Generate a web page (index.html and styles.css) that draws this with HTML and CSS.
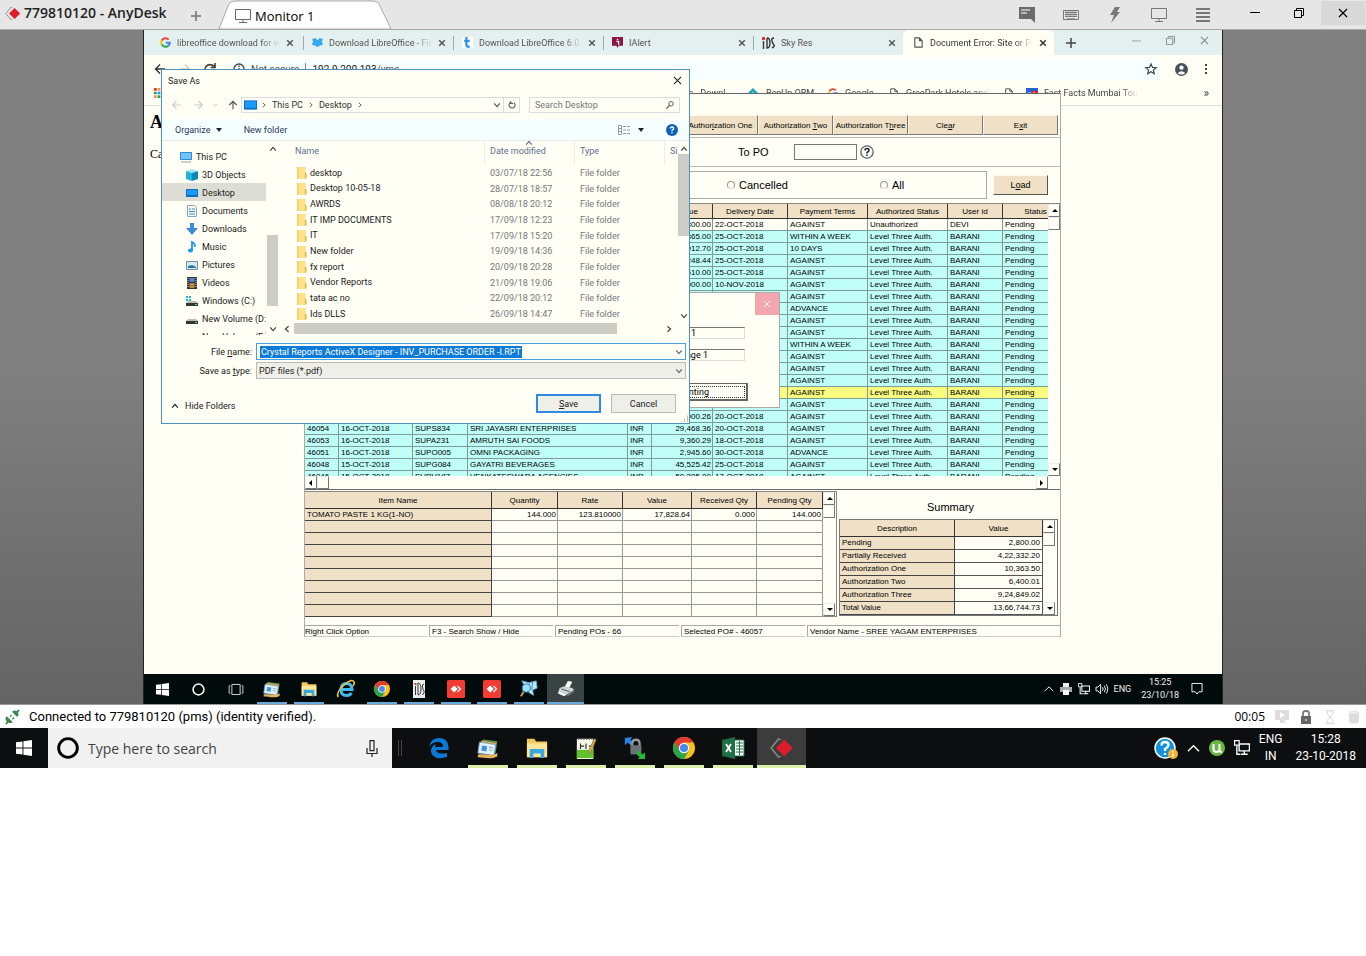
FILE: index.html
```html
<!DOCTYPE html>
<html lang="en">
<head>
<meta charset="utf-8">
<title>779810120 - AnyDesk</title>
<link rel="stylesheet" href="styles.css">
</head>
<body>
<svg class="sprite" aria-hidden="true">
  <symbol id="x" viewBox="0 0 10 10"><path d="M1 1l8 8M9 1l-8 8" fill="none" stroke="currentColor" stroke-width="1.2"/></symbol>
  <symbol id="xb" viewBox="0 0 10 10"><path d="M1.5 1.5l7 7M8.500 1.500l-7 7" fill="none" stroke="currentColor" stroke-width="1.800"/></symbol>
  <symbol id="up" viewBox="0 0 10 10"><path d="M1.500 7L5 3l3.500 4" fill="none" stroke="currentColor" stroke-width="1.500"/></symbol>
  <symbol id="wideup" viewBox="0 0 14 10"><path d="M1 8l6-6 6 6" fill="none" stroke="currentColor" stroke-width="1.400"/></symbol>
  <symbol id="down" viewBox="0 0 10 10"><path d="M1.500 3L5 7l3.500-4" fill="none" stroke="currentColor" stroke-width="1.500"/></symbol>
  <symbol id="left" viewBox="0 0 10 10"><path d="M7 1.500L3 5l4 3.500" fill="none" stroke="currentColor" stroke-width="1.500"/></symbol>
  <symbol id="right" viewBox="0 0 10 10"><path d="M3 1.500L7 5 3 8.500" fill="none" stroke="currentColor" stroke-width="1.500"/></symbol>
  <symbol id="arrow" viewBox="0 0 12 12"><path d="M11 6H1.500M6 1.500L1.500 6 6 10.500" fill="none" stroke="currentColor" stroke-width="1.400"/></symbol>
  <symbol id="folder" viewBox="0 0 10 13"><path d="M0 0h9v13H0z" fill="#fbe48b"/><path d="M0 0h1v13H0zM8 6l2 1v5l-2 1z" fill="#e6bd4b"/></symbol>
  <symbol id="page" viewBox="0 0 10 12"><path d="M1 1h5l3 3v7H1zM6 1v3h3" fill="none" stroke="#555" stroke-width="1.200"/></symbol>
  <symbol id="screen" viewBox="0 0 16 14"><path d="M.5.5h15v10H.5zM4 13.500h8M8 10.500v3" fill="none" stroke="currentColor"/></symbol>
  <symbol id="win" viewBox="0 0 16 16"><path d="M0 2.300l6.500-.9v6.100H0zM7.400 1.300L16 0v7.500H7.400zM0 8.400h6.500v6.200L0 13.700zM7.400 8.400H16V16l-8.600-1.200z" fill="#fff"/></symbol>
  <symbol id="google" viewBox="0 0 18 18"><g fill="none" stroke-width="3.400"><path d="M14.200 4.200A7 7 0 0 0 2.900 5.700" stroke="#ea4335"/><path d="M2.900 5.700a7 7 0 0 0 0 6.600" stroke="#fbbc05"/><path d="M2.900 12.300a7 7 0 0 0 10.800 2" stroke="#34a853"/><path d="M13.700 14.300A7 7 0 0 0 16 9.500H9.500" stroke="#4285f4"/></g></symbol>
  <symbol id="chrome" viewBox="0 0 24 24"><circle cx="12" cy="12" r="12" fill="#fbc116"/><path d="M1.600 6A12 12 0 0 1 22.400 6H12L7 15z" fill="#e33b2e"/><path d="M1.600 6A12 12 0 0 0 12 24l5.200-9-5.200 2-5-2z" fill="#2ba24c"/><circle cx="12" cy="12" r="5.600" fill="#fff"/><circle cx="12" cy="12" r="4.400" fill="#4688f1"/></symbol>
  <symbol id="explorer" viewBox="0 0 24 22"><path d="M1 1h8l2 3h12v17H1z" fill="#f5c75c"/><path d="M1 6h22v15H1z" fill="#fde59a"/><path d="M4 12h16v10h-4v-5H8v5H4z" fill="#38a9e0"/></symbol>
  <symbol id="photos" viewBox="0 0 26 26"><path d="M7 3l17 2-2 14-17-2z" fill="#4c9b55"/><path d="M5 4l18 3-3 14-17-3z" fill="#eaa34a"/><path d="M3 6l19 3-2 13-19-3z" fill="#dff1fc" stroke="#659ec1"/><path d="M6 10l6 1-1 6-6-1z" fill="#3f96d8"/><path d="M14 12l5 1M14 15l4 1" stroke="#7694a5"/><path d="M1 21c7-2 13 3 23-2v4c-8 4-16 1-23 1z" fill="#e5b35f"/></symbol>
  <symbol id="anyred" viewBox="0 0 20 20"><rect width="20" height="20" rx="2" fill="#f23c32"/><path d="M8 6l4 4-4 4-4-4zM12 6l4 4-4 4-1-1 3-3-3-3z" fill="#fff"/></symbol>
  <symbol id="anydesk" viewBox="0 0 20 16"><path d="M9 1L7 .500 1 8l6 7.500 2-.5" fill="none" stroke="#8c8c8c" stroke-width="1.200"/><path d="M12 1l7 7-7 7-7-7z" fill="#dd1d2c"/></symbol>
  <symbol id="net" viewBox="0 0 14 14"><path d="M4.500 3.500h9v6h-9zM9 9.500v3M6 12.500h6M2.500 5v7.500h3" fill="none" stroke="#fff" stroke-width="1.200"/><path d="M.5.500h4v4h-4z" fill="#111" stroke="#fff"/></symbol>
  <symbol id="drive" viewBox="0 0 12 12"><path d="M2 6h8l2 2H0z" fill="#bbb"/><path d="M0 8h12v3H0z" fill="#333"/><path d="M9 9h2v1H9z" fill="#5d8"/></symbol>
</svg>

<header class="titlebar">
  <svg class="logo"><use href="#anydesk"/></svg>
  <h1>779810120 - AnyDesk</h1>
  <button class="plus" aria-label="New tab"><svg viewBox="0 0 10 10"><path d="M5 0v10M0 5h10" stroke="#777" stroke-width="1.600"/></svg></button>
  <div class="session-tab">
    <svg class="tab-shape" viewBox="0 0 172 28" preserveAspectRatio="none"><path d="M0 28L9 5Q11 0 15 0H155Q159 0 161 5L172 28z" fill="#fff" stroke="#aaa"/></svg>
    <svg class="mon"><use href="#screen"/></svg><span>Monitor 1</span>
  </div>
  <div class="tools">
    <button aria-label="Chat"><svg viewBox="0 0 16 16"><path d="M0 0h16v16l-4-4H0z" fill="#6b6b6b"/><path d="M2 3h9M2 6h6" stroke="#fff" stroke-width="1.200"/></svg></button>
    <button aria-label="Keyboard"><svg viewBox="0 0 16 16"><path d="M.500 3.500h15v9H.500zM2 5.500h12M2 7.500h12M2 9.500h12" fill="none" stroke="#777"/><path d="M3 4v6M5 4v6M7 4v6M9 4v6M11 4v6M13 4v6M4 11.500h8" stroke="#888" stroke-width=".7"/></svg></button>
    <button aria-label="Actions"><svg viewBox="0 0 16 16"><path d="M8 0h5l-3 5h3L4 16l3-8H3z" fill="#777"/></svg></button>
    <button aria-label="Display"><svg viewBox="0 0 16 14"><use href="#screen"/></svg></button>
    <button aria-label="Menu"><svg viewBox="0 0 16 16"><path d="M1 2h14M1 6h14M1 10h14M1 14h14" stroke="#777" stroke-width="1.800"/></svg></button>
  </div>
  <div class="winctl">
    <button aria-label="Minimize"><svg viewBox="0 0 10 10"><path d="M0 4.500h10" stroke="#000"/></svg></button>
    <button aria-label="Restore"><svg viewBox="0 0 10 10"><path d="M.500 2.500h7v7h-7zM2.500 2V.500h7v7H8" fill="none" stroke="#000"/></svg></button>
    <button class="hot" aria-label="Close"><svg><use href="#x"/></svg></button>
  </div>
</header>

<main class="stage">
 <div class="screen">
  <nav class="tabs">
    <div class="tab"><svg><use href="#google"/></svg><span class="fade">libreoffice download for w</span><button aria-label="Close tab"><svg><use href="#xb"/></svg></button></div>
    <div class="tab"><svg viewBox="0 0 10 10"><path d="M0 2l3-1 2 2 2-2 3 1-1 2 1 3-3 1-2 1-2-1-3-1 1-3z" fill="#38a8ef"/></svg><span class="fade">Download LibreOffice - Fil</span><button aria-label="Close tab"><svg><use href="#xb"/></svg></button></div>
    <div class="tab"><svg viewBox="0 0 10 10"><path d="M0 0h10v10H0z" fill="#fff"/><path d="M4 0v7q0 2 3 2M2 3.500h5" stroke="#2c8ff0" stroke-width="2" fill="none"/></svg><span class="fade">Download LibreOffice 6.0.</span><button aria-label="Close tab"><svg><use href="#xb"/></svg></button></div>
    <div class="tab"><svg viewBox="0 0 10 10"><path d="M0 0h10v8H6l-1 2-1-2H0z" fill="#8c1743"/><path d="M4 4h2v3M5 1.500v1.300" stroke="#fff" stroke-width="1.200" fill="none"/></svg><span>IAlert</span><button aria-label="Close tab"><svg><use href="#xb"/></svg></button></div>
    <div class="tab last"><svg class="ids" viewBox="0 0 13 12"><path d="M1.500 4v8M5 1v10q3 0 3-5T5 1M12 1q-3 0-2 3t2 4-2 3" stroke="#333" stroke-width="1.400" fill="none"/><path d="M0 0h3v3H0z" fill="#d33"/></svg><span>Sky Res</span><button aria-label="Close tab"><svg><use href="#xb"/></svg></button></div>
    <div class="tab active"><svg><use href="#page"/></svg><span class="fade">Document Error: Site or Pa</span><button aria-label="Close tab"><svg><use href="#xb"/></svg></button></div>
    <button class="newtab" aria-label="New tab"><svg viewBox="0 0 10 10"><path d="M5 0v10M0 5h10" stroke="#444" stroke-width="1.500"/></svg></button>
    <div class="chromectl">
      <svg viewBox="0 0 10 10"><path d="M0 5.500h10" stroke="#999"/></svg>
      <svg viewBox="0 0 10 10"><path d="M.500 2.500h7v7h-7zM2.500 2V.500h7v7H8" fill="none" stroke="#888"/></svg>
      <svg><use href="#x"/></svg>
    </div>
  </nav>
  <div class="toolbar">
    <svg><use href="#arrow"/></svg><svg class="dim flip"><use href="#arrow"/></svg>
    <svg viewBox="0 0 12 12"><path d="M10 3.500A5 5 0 1 0 11 7M11 0v4.500H6.500" fill="none" stroke="#444" stroke-width="1.700"/></svg>
    <div class="omni"><svg viewBox="0 0 12 12"><circle cx="6" cy="6" r="5" fill="none" stroke="#444" stroke-width="1.300"/><path d="M6 5v4M6 2.500V4" stroke="#444" stroke-width="1.300"/></svg><span>Not secure</span><i></i><b>192.9.200.193</b><span>/vms</span>
      <svg class="star" viewBox="0 0 12 12"><path d="M6 1l1.500 3.400 3.700.3-2.800 2.400.9 3.600L6 8.800l-3.300 1.900.9-3.600L.800 4.700l3.700-.3z" fill="none" stroke="#444" stroke-width="1.200"/></svg></div>
    <svg class="user" viewBox="0 0 14 14"><circle cx="7" cy="7" r="7" fill="#44525a"/><circle cx="7" cy="5" r="2.300" fill="#fff"/><path d="M2.800 11q4.200-4.500 8.400 0-4 3-8.400 0" fill="#fff"/></svg>
    <svg class="dots" viewBox="0 0 4 12"><path d="M1 1h2v2H1zM1 5h2v2H1zM1 9h2v2H1z" fill="#444"/></svg>
  </div>
  <div class="bookmarks">
    <svg viewBox="0 0 11 11"><path d="M0 0h3v3H0zM8 0h3v3H8z" fill="#e33"/><path d="M4 0h3v3H4zM0 8h3v3H0z" fill="#e94"/><path d="M0 4h3v3H0zM4 8h3v3H4z" fill="#2a5"/><path d="M4 4h3v3H4zM8 4h3v3H8z" fill="#38e"/></svg>
    <span class="bm-first fade">es - Downl</span>
    <svg viewBox="0 0 10 10"><path d="M5 0l5 5-5 5-5-5z" fill="#1ba9b9"/><path d="M5 4l2 2-2 2-2-2z" fill="#fff"/></svg><span class="bm-b">RepUp ORM</span>
    <svg><use href="#google"/></svg><span class="bm-c">Google</span>
    <svg><use href="#page"/></svg><span class="bm-d fade">GreePark Hotels and -</span>
    <svg class="bm-e"><use href="#page"/></svg>
    <svg class="ff" viewBox="0 0 12 10"><path d="M0 0h12v10H0z" fill="#2b61d1"/><path d="M6 3h6v5H6z" fill="#e22"/><path d="M2 5h3M8 4v3" stroke="#fff"/></svg><span class="fade">Fast Facts Mumbai Tou</span>
    <span class="more">»</span>
  </div>
  <div class="webpage"><h2>A</h2><p>Ca</p></div>

  <section class="erp">
    <div class="actions">
      <button>Author<u>i</u>zation One</button><button>Authorization <u>T</u>wo</button><button>Authorization T<u>h</u>ree</button><button>Cle<u>a</u>r</button><button>E<u>x</u>it</button>
    </div>
    <div class="po"><label for="topo">To PO</label><input id="topo" type="text"><svg viewBox="0 0 14 14"><circle cx="7" cy="7" r="6.200" fill="#fff" stroke="#566" stroke-width="1.300"/><path d="M5 5.500q0-2 2-2t2 1.700q0 1-2 2.300v1M7 9.500v1.500" fill="none" stroke="#222" stroke-width="1.500"/></svg></div>
    <div class="filter">
      <div class="radios"><label><input type="radio" name="st"> Cancelled</label><label><input type="radio" name="st"> All</label></div>
      <button>L<u>o</u>ad</button>
    </div>
    <div class="orders">
      <div class="clip">
      <table>
        <colgroup><col class="w34"><col class="w74"><col class="w55"><col class="w160"><col class="w24"><col class="w61"><col class="w75"><col class="w80"><col class="w80"><col class="w55"><col class="w66"></colgroup>
        <thead><tr><th colspan="5"></th><th class="val">Value</th><th>Delivery Date</th><th>Payment Terms</th><th>Authorized Status</th><th>User id</th><th>Status</th></tr></thead>
        <tbody>
        <tr class="plain"><td colspan="5"><td class="n">800.00<td>22-OCT-2018<td>AGAINST<td>Unauthorized<td>DEVI<td>Pending</tr>
        <tr><td colspan="5"><td class="n">365.00<td>25-OCT-2018<td>WITHIN A WEEK<td>Level Three Auth.<td>BARANI<td>Pending</tr>
        <tr><td colspan="5"><td class="n">912.70<td>25-OCT-2018<td>10 DAYS<td>Level Three Auth.<td>BARANI<td>Pending</tr>
        <tr><td colspan="5"><td class="n">248.44<td>25-OCT-2018<td>AGAINST<td>Level Three Auth.<td>BARANI<td>Pending</tr>
        <tr><td colspan="5"><td class="n">610.00<td>25-OCT-2018<td>AGAINST<td>Level Three Auth.<td>BARANI<td>Pending</tr>
        <tr><td colspan="5"><td class="n">000.00<td>10-NOV-2018<td>AGAINST<td>Level Three Auth.<td>BARANI<td>Pending</tr>
        <tr><td colspan="5"><td><td><td>AGAINST<td>Level Three Auth.<td>BARANI<td>Pending</tr>
        <tr><td colspan="5"><td><td><td>ADVANCE<td>Level Three Auth.<td>BARANI<td>Pending</tr>
        <tr><td colspan="5"><td><td><td>AGAINST<td>Level Three Auth.<td>BARANI<td>Pending</tr>
        <tr><td colspan="5"><td><td><td>AGAINST<td>Level Three Auth.<td>BARANI<td>Pending</tr>
        <tr><td colspan="5"><td><td><td>WITHIN A WEEK<td>Level Three Auth.<td>BARANI<td>Pending</tr>
        <tr><td colspan="5"><td><td><td>AGAINST<td>Level Three Auth.<td>BARANI<td>Pending</tr>
        <tr><td colspan="5"><td><td><td>AGAINST<td>Level Three Auth.<td>BARANI<td>Pending</tr>
        <tr><td colspan="5"><td><td><td>AGAINST<td>Level Three Auth.<td>BARANI<td>Pending</tr>
        <tr class="sel"><td colspan="5"><td><td><td>AGAINST<td>Level Three Auth.<td>BARANI<td>Pending</tr>
        <tr><td colspan="5"><td><td><td>AGAINST<td>Level Three Auth.<td>BARANI<td>Pending</tr>
        <tr><td colspan="5"><td class="n">000.26<td>20-OCT-2018<td>AGAINST<td>Level Three Auth.<td>BARANI<td>Pending</tr>
        <tr><td>46054<td>16-OCT-2018<td>SUPS834<td>SRI JAYASRI ENTERPRISES<td>INR<td class="n">29,468.36<td>20-OCT-2018<td>AGAINST<td>Level Three Auth.<td>BARANI<td>Pending</tr>
        <tr><td>46053<td>16-OCT-2018<td>SUPA231<td>AMRUTH SAI FOODS<td>INR<td class="n">9,360.29<td>18-OCT-2018<td>AGAINST<td>Level Three Auth.<td>BARANI<td>Pending</tr>
        <tr><td>46051<td>16-OCT-2018<td>SUPO005<td>OMNI PACKAGING<td>INR<td class="n">2,945.60<td>30-OCT-2018<td>ADVANCE<td>Level Three Auth.<td>BARANI<td>Pending</tr>
        <tr><td>46048<td>15-OCT-2018<td>SUPG084<td>GAYATRI BEVERAGES<td>INR<td class="n">45,525.42<td>25-OCT-2018<td>AGAINST<td>Level Three Auth.<td>BARANI<td>Pending</tr>
        <tr><td>46046<td>15-OCT-2018<td>SUPV187<td>VENKATESWARA AGENCIES<td>INR<td class="n">50,205.00<td>17-OCT-2018<td>AGAINST<td>Level Three Auth.<td>BARANI<td>Pending</tr>
        </tbody>
      </table>
      </div>
      <div class="vbar"><i class="u"></i><i class="box"></i><i class="d end"></i></div>
    </div>
    <div class="hbar"><i class="l"></i><i class="box"></i><i class="r end"></i></div>
    <div class="bottom">
      <table class="items">
        <colgroup><col class="w187"><col class="w66"><col class="w65"><col class="w69"><col class="w65"><col class="w66"></colgroup>
        <thead><tr><th>Item Name<th>Quantity<th>Rate<th>Value<th>Received Qty<th>Pending Qty</tr></thead>
        <tbody>
        <tr><td>TOMATO PASTE 1 KG(1-NO)<td>144.000<td>123.810000<td>17,828.64<td>0.000<td>144.000</tr>
        <tr><td><td><td><td><td><td></tr><tr><td><td><td><td><td><td></tr><tr><td><td><td><td><td><td></tr><tr><td><td><td><td><td><td></tr>
        <tr><td><td><td><td><td><td></tr><tr><td><td><td><td><td><td></tr><tr><td><td><td><td><td><td></tr><tr><td><td><td><td><td><td></tr>
        </tbody>
      </table>
      <div class="vbar"><i class="u"></i><i class="box"></i><i class="d end"></i></div>
      <div class="summary">
        <h3>Summary</h3>
        <div class="sumrow">
        <table>
          <thead><tr><th>Description<th>Value</tr></thead>
          <tbody><tr><td>Pending<td>2,800.00</tr><tr><td>Partially Received<td>4,22,332.20</tr><tr><td>Authorization One<td>10,363.50</tr><tr><td>Authorization Two<td>6,400.01</tr><tr><td>Authorization Three<td>9,24,849.02</tr><tr><td>Total Value<td>13,66,744.73</tr></tbody>
        </table>
        <div class="vbar"><i class="u"></i><i class="box"></i><i class="d end"></i></div>
        </div>
      </div>
    </div>
    <footer><span>Right Click Option</span><span>F3 - Search Show / Hide</span><span>Pending POs - 66</span><span>Selected PO# - 46057</span><span>Vendor Name - SREE YAGAM ENTERPRISES</span></footer>
  </section>

  <section class="printing">
    <button class="pclose" aria-label="Close"><svg><use href="#x"/></svg></button>
    <p>1</p><p>Page 1</p>
    <button class="cancelp">Cancel Printing</button>
  </section>

  <section class="dialog" role="dialog" aria-label="Save As">
    <div class="dtitle"><span>Save As</span><button aria-label="Close"><svg><use href="#x"/></svg></button></div>
    <div class="addr">
      <svg class="dim"><use href="#arrow"/></svg><svg class="dim flip"><use href="#arrow"/></svg><svg class="dim tiny"><use href="#down"/></svg><svg class="north"><use href="#arrow"/></svg>
      <div class="path"><svg class="desk" viewBox="0 0 14 10"><path d="M0 0h14v10H0z" fill="#0f6fc4"/><path d="M1 1h12v7H1z" fill="#1a9bfc"/></svg><svg><use href="#right"/></svg><span>This PC</span><svg><use href="#right"/></svg><span>Desktop</span><svg><use href="#right"/></svg><svg class="end drop"><use href="#down"/></svg></div>
      <button class="refresh" aria-label="Refresh"><svg viewBox="0 0 10 10"><path d="M3 1.800A3.800 3.800 0 1 0 7.500 2M3.500 0v3h3" fill="none" stroke="#555" stroke-width="1.300"/></svg></button>
      <div class="search"><input type="text" placeholder="Search Desktop" aria-label="Search Desktop"><svg viewBox="0 0 10 10"><circle cx="6.300" cy="3.500" r="2.800" fill="none" stroke="#555" stroke-width="1.200"/><path d="M4.500 5.500L.500 9.500" stroke="#555" stroke-width="1.500"/></svg></div>
    </div>
    <div class="dtools"><button>Organize <i class="tri"></i></button><button>New folder</button>
      <svg class="view" viewBox="0 0 13 10"><path d="M.500.500h3v9h-3zM.500 3.500h3M.500 6.500h3" fill="none" stroke="#999"/><path d="M5 1.500h3M9 1.500h3M5 5h3M9 5h3M5 8.500h3M9 8.500h3" stroke="#999"/></svg><i class="tri"></i>
      <svg class="help" viewBox="0 0 12 12"><circle cx="6" cy="6" r="6" fill="#0d62b8"/><path d="M4.300 4.600q0-1.600 1.700-1.600t1.700 1.400q0 .8-1.700 1.900v1M6 8v1.300" fill="none" stroke="#fff" stroke-width="1.300"/></svg></div>
    <div class="dbody">
      <ul class="tree">
        <li class="root"><svg viewBox="0 0 12 12"><path d="M0 1h12v8H0z" fill="#2c8fda"/><path d="M1 2h10v6H1z" fill="#74c4f7"/><path d="M1 11h10" stroke="#99a" /></svg>This PC</li>
        <li><svg viewBox="0 0 12 12"><path d="M0 2l6-2 6 2-6 2z" fill="#9ce6f7"/><path d="M0 2l6 2v8l-6-2z" fill="#1fb3d8"/><path d="M12 2L6 4v8l6-2z" fill="#0b89b4"/></svg>3D Objects</li>
        <li class="on"><svg viewBox="0 0 12 12"><path d="M0 2h12v8H0z" fill="#0f6fc4"/><path d="M1 3h10v5H1z" fill="#1a9bfc"/></svg>Desktop</li>
        <li><svg viewBox="0 0 12 12"><path d="M1.500.500h7l2 2v9h-9z" fill="#f4f9fb" stroke="#8aa"/><path d="M3 4h2M6 4h3M3 6.500h6M3 9h6" stroke="#3f87ba"/></svg>Documents</li>
        <li><svg viewBox="0 0 12 12"><path d="M4 0h4v5h4l-6 7-6-7h4z" fill="#3d8bdd"/></svg>Downloads</li>
        <li><svg viewBox="0 0 12 12"><path d="M6 9V1q3 1 3 5" fill="none" stroke="#189ae8" stroke-width="1.800"/><ellipse cx="4.500" cy="9.500" rx="2.500" ry="2" fill="#189ae8"/></svg>Music</li>
        <li><svg viewBox="0 0 12 12"><path d="M.500 2.500h11v8H.500z" fill="#cfe9f8" stroke="#889"/><path d="M2 9V7l4-1 4 2v1z" fill="#267d9a"/></svg>Pictures</li>
        <li><svg viewBox="0 0 12 12"><path d="M1 0h10v12H1z" fill="#333"/><path d="M3.500 1h5v4h-5z" fill="#5483d6"/><path d="M3.500 6h5v5h-5z" fill="#b58a45"/><path d="M2 1v10M10 1v10" stroke="#ddd" stroke-dasharray="1 1"/></svg>Videos</li>
        <li><svg viewBox="0 0 12 12"><use href="#drive"/><path d="M0 1h2v2H0zM3 1h2v2H3zM0 4h2v2H0zM3 4h2v2H3z" fill="#1fb6e0"/></svg>Windows (C:)</li>
        <li><svg><use href="#drive"/></svg>New Volume (D:)</li>
        <li><svg></svg>New Volume (E:)</li>
      </ul>
      <div class="sbar"><svg><use href="#up"/></svg><i></i><svg class="end"><use href="#down"/></svg></div>
      <div class="files">
        <div class="fmain">
          <table>
            <thead><tr><th>Name<th class="sorted">Date modified<svg><use href="#up"/></svg><th>Type<th>Size</tr></thead>
            <tbody>
            <tr><td><svg><use href="#folder"/></svg>desktop<td>03/07/18 22:56<td>File folder<td></tr>
            <tr><td><svg><use href="#folder"/></svg>Desktop 10-05-18<td>28/07/18 18:57<td>File folder<td></tr>
            <tr><td><svg><use href="#folder"/></svg>AWRDS<td>08/08/18 20:12<td>File folder<td></tr>
            <tr><td><svg><use href="#folder"/></svg>IT IMP DOCUMENTS<td>17/09/18 12:23<td>File folder<td></tr>
            <tr><td><svg><use href="#folder"/></svg>IT<td>17/09/18 15:20<td>File folder<td></tr>
            <tr><td><svg><use href="#folder"/></svg>New folder<td>19/09/18 14:36<td>File folder<td></tr>
            <tr><td><svg><use href="#folder"/></svg>fx report<td>20/09/18 20:28<td>File folder<td></tr>
            <tr><td><svg><use href="#folder"/></svg>Vendor Reports<td>21/09/18 19:06<td>File folder<td></tr>
            <tr><td><svg><use href="#folder"/></svg>tata ac no<td>22/09/18 20:12<td>File folder<td></tr>
            <tr><td><svg><use href="#folder"/></svg>Ids DLLS<td>26/09/18 14:47<td>File folder<td></tr>
            </tbody>
          </table>
          <div class="sbar fbar"><svg><use href="#up"/></svg><i></i><svg class="end"><use href="#down"/></svg></div>
        </div>
        <div class="hs"><svg><use href="#left"/></svg><i></i><svg><use href="#right"/></svg></div>
      </div>
    </div>
    <div class="form">
      <label for="fn">File <u>n</u>ame:</label><div class="combo act"><input id="fn" type="text" value="Crystal Reports ActiveX Designer - INV_PURCHASE ORDER -I.RPT"><svg><use href="#down"/></svg></div>
      <label for="ft">Save as <u>t</u>ype:</label><div class="combo grey"><select id="ft"><option>PDF files (*.pdf)</option></select><svg><use href="#down"/></svg></div>
    </div>
    <div class="dfoot"><button class="hide"><svg><use href="#up"/></svg>Hide Folders</button><button class="btn primary"><u>S</u>ave</button><button class="btn">Cancel</button><i class="grip"></i></div>
  </section>

  <div class="rtask">
    <div class="ricons">
      <span><svg class="s13"><use href="#win"/></svg></span>
      <span><svg class="s13" viewBox="0 0 12 12"><circle cx="6" cy="6" r="5" fill="none" stroke="#fff" stroke-width="1.400"/></svg></span>
      <span><svg class="tview" viewBox="0 0 16 12"><path d="M3.500.500h9v11h-9zM2 2H.500v8H2M14 2h1.500v8H14" fill="none" stroke="#ddd"/></svg></span>
      <span class="run"><svg><use href="#photos"/></svg></span>
      <span class="run"><svg class="s16"><use href="#explorer"/></svg></span>
      <span><svg viewBox="0 0 18 18"><path d="M4 9.500h11q0-6-5.500-6T4 9.500t5.500 6q3.500 0 5-2.500" fill="none" stroke="#42b8f0" stroke-width="3"/><path d="M1 17Q-1 12 7 5t10-3q1 1-1 4" fill="none" stroke="#f2c23c" stroke-width="1.600"/></svg></span>
      <span class="run"><svg class="s16"><use href="#chrome"/></svg></span>
      <span class="run"><svg viewBox="0 0 14 18"><path d="M1 0h12v18H1z" fill="#eee"/><path d="M3.500 6v9M6 3v12q3 0 3-6T6 3M12 4q-2 0-1.500 3t1.500 4-1.500 4" fill="none" stroke="#333"/><path d="M2.500 3h2v2h-2z" fill="#d33"/></svg></span>
      <span class="run"><svg><use href="#anyred"/></svg></span>
      <span class="run"><svg><use href="#anyred"/></svg></span>
      <span class="run"><svg viewBox="0 0 20 20"><path d="M2 1l8 2 8-2 1 8-5 2 1 6-5-3z" fill="#bfe6f7" stroke="#5cb0dd"/><path d="M10 3v8M14 2l-1 9" stroke="#2587c5"/><circle cx="7" cy="9" r="4.500" fill="#9be0fa" stroke="#277ab4"/><path d="M4 13l-3 5" stroke="#d7a14b" stroke-width="2"/></svg></span>
      <span class="run cur"><svg viewBox="0 0 20 18"><path d="M12 0l5 1-4 8-5-1z" fill="#fff"/><path d="M3 8l5-2 9 2 2 2-8 5-9-4z" fill="#cfd4d6"/><path d="M2 11l9 4-3 2-7-3z" fill="#f4f6f6"/><path d="M11 15l8-5v2l-7 5z" fill="#6b7476"/><path d="M5 9l9 3" stroke="#444"/></svg></span>
    </div>
    <div class="rtray"><svg class="s10"><use href="#wideup"/></svg><svg viewBox="0 0 12 12"><path d="M3 0h6v4H3z" fill="#eee"/><path d="M0 4h12v5H0z" fill="#aaa"/><path d="M3 7h6v5H3z" fill="#fff"/></svg><svg><use href="#net"/></svg><svg viewBox="0 0 13 12"><path d="M0 4h2l3-3v10L2 8H0zM7 4q1.500 2 0 4M9 2.500q2.500 3.500 0 7M11 1q3.500 5 0 10" fill="none" stroke="#fff"/></svg><span>ENG</span><span class="clock">15:25<br>23/10/18</span><svg class="note" viewBox="0 0 12 13"><path d="M.500.500h11v9H8L6 12 4 9.500H.500z" fill="none" stroke="#fff"/></svg></div>
  </div>
 </div>
</main>

<div class="status">
  <svg viewBox="0 0 16 16"><path d="M1 16l4-4M11 5l5-5" stroke="#2a7a3c" stroke-width="2"/><path d="M2 7l7 7q-4 2-7-1t0-6zM8 2l6 6q3-3 0-6t-6 0zM5 7l2-2 1 1-2 2zM8 10l2-2 1 1-2 2z" fill="#3a8a4c"/></svg>
  <span class="msg">Connected to 779810120 (pms) (identity verified).</span>
  <span class="time">00:05</span>
  <svg viewBox="0 0 14 14"><path d="M0 0h14v10H9l2 3H5v-3H0z" fill="#ddd"/><path d="M5 2l5 3-5 3z" fill="#fff"/></svg>
  <svg viewBox="0 0 14 14"><path d="M4 7V3q0-2 3-2t3 2v4" fill="none" stroke="#777" stroke-width="1.800"/><path d="M2 6h10v8H2z" fill="#666"/><path d="M7 9v2" stroke="#fff"/></svg>
  <svg viewBox="0 0 14 14"><path d="M3 .500h8M3 13.500h8M4 1q0 4 3 6-3 2-3 6h6q0-4-3-6 3-2 3-6z" fill="none" stroke="#ddd"/></svg>
  <svg viewBox="0 0 14 14"><path d="M2 2q5-3 10 0v10q-5 3-10 0z" fill="#ddd"/><ellipse cx="7" cy="2.500" rx="4" ry="1" fill="#f2f2f2"/></svg>
</div>

<footer class="taskbar">
  <button class="start" aria-label="Start"><svg><use href="#win"/></svg></button>
  <div class="tsearch"><svg class="cort" viewBox="0 0 20 20"><circle cx="10" cy="10" r="8.500" fill="none" stroke="#000" stroke-width="2.600"/></svg><input type="text" placeholder="Type here to search" aria-label="Type here to search"><svg class="mic" viewBox="0 0 12 17"><path d="M4 .600h4v10H4zM1 8v5.500h10V8M6 13.500V17" fill="none" stroke="#222" stroke-width="1.200"/></svg></div>
  <i class="sep"></i>
  <div class="apps">
    <span><svg viewBox="0 0 22 22"><path d="M1 10Q3 1 11 1q9 0 9.500 9v3H8q1 5 11 3v4q-15 4-16-6 0-5 5-7-1 2-1 3h8q0-5-5-5-6 0-9 5z" fill="#0a78d7"/></svg></span>
    <span class="run"><svg><use href="#photos"/></svg></span>
    <span class="run"><svg><use href="#explorer"/></svg></span>
    <span class="run"><svg viewBox="0 0 22 24"><path d="M1 2h18v22H1z" fill="#f4f8e8"/><path d="M1 14h18v9H1z" fill="#61c02c"/><path d="M2 2h16" stroke="#555" stroke-width="2" stroke-dasharray="1.500 1.500"/><path d="M5 7v6M5 10h4M11 7v6M14 10h3" stroke="#333" stroke-width="1.300"/><path d="M20 2l2 1-6 14-2 1v-3z" fill="#e3b92d" stroke="#875"/></svg></span>
    <span class="run"><svg viewBox="0 0 22 24"><path d="M0 1l8-1-2 3 3 3-3 3-3-3-3 3z" fill="#2386e8"/><path d="M8 11V7q0-4 4-4t4 4v4" fill="none" stroke="#999" stroke-width="2.500"/><path d="M6 9h12v10H6z" fill="#6b7278"/><path d="M13 14l3 2 3 3 3-2v7h-8l2-2-3-3z" fill="#28b63a"/></svg></span>
    <span class="run"><svg><use href="#chrome"/></svg></span>
    <span class="run"><svg viewBox="0 0 22 22"><path d="M12 3h10v16H12z" fill="#fff" stroke="#207245"/><path d="M14 6h7M14 9h7M14 12h7M14 15h7M17.500 4v14" stroke="#207245"/><path d="M0 3l13-3v22L0 19z" fill="#1d7044"/><path d="M4 7l5 8M9 7l-5 8" stroke="#fff" stroke-width="1.800"/></svg></span>
    <span class="run cur"><svg class="any"><use href="#anydesk"/></svg></span>
  </div>
  <div class="tray">
    <svg class="big" viewBox="0 0 24 22"><circle cx="11" cy="11" r="10" fill="#1493dc" stroke="#fff" stroke-width="1.500"/><path d="M7.500 8.500q0-3.500 3.500-3.500t3.500 3q0 2-3.500 4v2M11 16v2" fill="none" stroke="#fff" stroke-width="2.300"/><circle cx="19" cy="17" r="5" fill="#f5b335"/><path d="M19 14v1.500M19 16.500v3.500" stroke="#fff" stroke-width="1.500"/></svg>
    <svg class="s13"><use href="#wideup"/></svg>
    <svg class="s16" viewBox="0 0 16 16"><circle cx="8" cy="8" r="8" fill="#6cb644"/><path d="M4.500 4v5q0 3 3 3t3-3V4M10.500 10q0 2 2.500 2" fill="none" stroke="#fff" stroke-width="2"/></svg>
    <svg class="s16"><use href="#net"/></svg>
    <span>ENG<br>IN</span><span class="date">15:28<br>23-10-2018</span>
  </div>
</footer>
</body>
</html>
```
FILE: styles.css
```css
* { box-sizing: border-box; }
body { margin: 0; background: #fff; font: 12px "Open Sans", sans-serif; color: #000; }
h1, h2, h3, p, ul { margin: 0; padding: 0; }
button, input, select { font: inherit; color: inherit; background: none; border: 0; padding: 0; margin: 0; border-radius: 0; }
svg { display: block; flex: none; overflow: visible; }
i { font-style: normal; }
.sprite { position: absolute; width: 0; height: 0; }
.end { margin-left: auto; }
.dim { color: #ccc; }
.flip { transform: scaleX(-1); }
.fade { -webkit-mask-image: linear-gradient(90deg, #000 82%, transparent); mask-image: linear-gradient(90deg, #000 82%, transparent); }
.s10 { width: 10px; height: 10px; }
.s13 { width: 13px; height: 13px; }
.s16 { width: 16px; height: 16px; }

/* AnyDesk title bar */
.titlebar { display: flex; align-items: center; height: 30px; background: #e6e6e6; border-bottom: 1px solid #aaa; padding-left: 5px; }
.logo { width: 16px; height: 13px; margin-bottom: 3px; }
.titlebar h1 { font-size: 14px; font-weight: 600; line-height: 26px; margin-left: 3px; color: #222; width: 145px; white-space: nowrap; padding-bottom: 3px; }
.plus { width: 10px; margin: 2px 0 0 22px; }
.session-tab { position: relative; display: flex; align-items: center; width: 172px; height: 28px; margin: 1px 0 0 18px; padding: 2px 0 0 16px; font-size: 13px; }
.session-tab span { position: relative; margin-left: 4px; }
.tab-shape { position: absolute; inset: 0; width: 100%; height: 100%; }
.mon { position: relative; width: 16px; height: 14px; color: #666; }
.tools { display: flex; margin-left: auto; gap: 28px; color: #777; }
.tools svg { width: 16px; height: 16px; }
.winctl { display: flex; align-self: flex-start; margin: 1px 0 0 22px; padding-right: 1px; }
.winctl button { width: 44px; height: 24px; display: grid; place-items: center; }
.winctl svg { width: 10px; height: 10px; }
.winctl .hot { background: #d8d8d8; }

/* Remote screen */
.stage { background: linear-gradient(#808080 50%, #646464); padding: 0 143px; }
.screen { position: relative; display: flex; flex-direction: column; min-height: 674px; background: #fffff6; border: solid #222; border-width: 0 1px; font: 9px Roboto, sans-serif; overflow: hidden; }
.tabs { display: flex; height: 25px; background: #e4f0ef; color: #555; }
.tab { display: flex; align-items: center; width: 150px; padding-right: 7px; gap: 6px; position: relative; }
.tab:first-child { padding-left: 16px; width: 159px; padding-right: 9px; }
.tab::before { content: ""; width: 1px; height: 14px; background: #9aa; margin-right: 2px; }
.tab:first-child::before, .tab.active::before { display: none; }
.tab > svg { width: 11px; height: 11px; }
.tab .ids { width: 13px; height: 12px; }
.tab span { flex: 1; min-width: 0; white-space: nowrap; }
.tab button svg { width: 8px; height: 8px; }
.tab.active { background: #fffff6; border-radius: 6px 6px 0 0; color: #333; padding-left: 10px; width: 151px; }
.tab.last { border-radius: 0 0 6px; }
.newtab { width: 10px; margin-left: 12px; }
.chromectl { display: flex; gap: 25px; margin-left: auto; padding: 6px 13px 0 0; color: #888; }
.chromectl svg { width: 9px; height: 9px; }
.toolbar { display: flex; align-items: center; height: 27px; padding: 3px 14px 2px 10px; gap: 13px; color: #333; font-size: 10px; }
.toolbar svg { width: 12px; height: 12px; }
.omni { flex: 1; display: flex; align-items: center; gap: 6px; height: 22px; background: #f7ffff; border-radius: 11px; padding: 0 5px 0 4px; color: #555; }
.omni i { width: 1px; height: 12px; background: #888; }
.omni b { font-weight: 400; color: #222; margin-right: -6px; }
.omni .star { margin-left: auto; }
.toolbar .user { width: 13px; height: 13px; margin-right: 3px; }
.toolbar .dots { width: 4px; }
.bookmarks { display: flex; align-items: center; height: 24px; border-bottom: 1px solid #ddd; padding: 0 13px 1px 10px; color: #444; white-space: nowrap; }
.bookmarks svg { width: 10px; height: 10px; }
.bm-first { margin-left: 520px; width: 50px; }
.bookmarks .bm-first + svg { margin-left: 14px; }
.bm-b { margin: 0 12px 0 8px; width: 50px; }
.bm-c { margin: 0 13px 0 7px; width: 31px; }
.bm-d { margin: 0 14px 0 7px; width: 84px; }
.bookmarks .ff { width: 12px; margin: 0 6px 0 12px; }
.more { margin-left: auto; font-size: 12px; }
.webpage { flex: 1; padding: 5px 6px; font-family: "Liberation Serif", serif; }
.webpage h2 { font-size: 18px; line-height: 22px; }
.webpage p { font-size: 12px; margin-top: 14px; line-height: 14px; }

/* Purchase order window */
.erp { position: absolute; left: 160px; top: 63px; width: 757px; background: #fffff6; border: 1px solid #aaa; border-top-color: #666; border-bottom: 0; padding-top: 21px; font: 8px "Liberation Sans", sans-serif; }
.erp table { border-spacing: 0; table-layout: fixed; }
.erp th, .erp td { padding: 0 2px; white-space: nowrap; overflow: hidden; }
.erp th { background: #efe0c6; font-weight: 400; border: solid #333; border-width: 0 1px 1px 0; }
.actions { display: flex; justify-content: flex-end; padding: 0 2px 2px 0; border-bottom: 1px solid #bbb; }
.actions button { width: 75px; height: 20px; white-space: nowrap; }
.actions button, .filter button { background: #efe0c6; border: 1px solid; border-color: #fff8e8 #777 #777 #fff8e8; text-align: center; }
.po { display: flex; align-items: center; height: 29px; border-bottom: 1px solid #bbb; padding-left: 433px; font-size: 11px; }
.po label { width: 56px; }
.po input { width: 63px; height: 16px; border: 1px solid #777; }
.po svg { width: 14px; height: 14px; margin-left: 3px; }
.filter { display: flex; align-items: center; height: 37px; border-bottom: 1px solid #888; font-size: 11px; }
.radios { display: flex; align-items: center; width: 682px; height: 28px; border: 1px solid #aaa; padding-left: 421px; }
.radios label { display: flex; align-items: center; gap: 4px; }
.radios label:first-child { flex: 0 0 153px; }
.radios input { appearance: none; width: 8px; height: 8px; border: 1px solid #999; border-radius: 50%; border-bottom-color: #ddd; }
.filter button { width: 55px; height: 20px; margin-left: 6px; border-color: #fff8e8 #555 #555 #fff8e8; font-size: 9px; }
.orders { display: flex; }
.clip { flex: 1; height: 272px; overflow: hidden; }
.orders table { width: 764px; }
.orders th { height: 15px; }
.orders .val { padding-left: 14px; }
.orders td { height: 12px; line-height: 11px; background: #bffff7; border: solid #7b9c98; border-width: 0 1px 1px 0; }
.orders .plain td { background: #fffff6; }
.orders .sel td { background: #f9fb7f; }
.orders .n { text-align: right; padding-right: 1px; }
.w24 { width: 24px; } .w34 { width: 34px; } .w55 { width: 55px; } .w61 { width: 61px; } .w65 { width: 65px; } .w66 { width: 66px; } .w69 { width: 69px; } .w74 { width: 74px; } .w75 { width: 75px; } .w80 { width: 80px; } .w160 { width: 160px; } .w187 { width: 187px; }
.vbar { display: flex; flex-direction: column; width: 12px; }
.vbar i, .hbar i { position: relative; width: 12px; height: 13px; border: 1px solid; border-color: #eee #777 #777 #eee; }
.vbar .end { margin: auto 0 0; }
.u::after, .d::after, .l::after, .r::after { content: ""; position: absolute; left: 3px; top: 3px; border: 3px solid transparent; }
.u::after { border-bottom-color: #000; border-top: 0; top: 4px; }
.d::after { border-top-color: #000; border-bottom: 0; top: 4px; }
.l::after { border-right-color: #000; border-left: 0; }
.r::after { border-left-color: #000; border-right: 0; }
.hbar { display: flex; padding-right: 12px; border-bottom: 1px solid #666; }
.bottom { display: flex; margin-top: 1px; }
.items { width: 518px; border-top: 1px solid #888; }
.items th { height: 17px; }
.items td { height: 12px; line-height: 11px; border: solid #999; border-width: 0 1px 1px 0; text-align: right; padding-right: 1px; }
.items td:first-child, .summary td:first-child { background: #efe0c6; text-align: left; border-color: #444; }
.bottom > .vbar { width: 14px; border: solid #888; border-width: 1px 1px 1px 0; }
.bottom > .vbar + .summary { flex: 1; padding: 9px 2px 0 2px; }
.summary h3 { font-size: 11px; font-weight: 400; text-align: center; line-height: 14px; margin-bottom: 5px; padding-left: 4px; }
.sumrow { display: flex; border: 1px solid #777; }
.summary table { flex: 1; }
.summary th { height: 17px; }
.summary th:first-child { width: 115px; }
.summary td { height: 13px; line-height: 12px; border: solid #555; border-width: 0 1px 1px 0; text-align: right; }
.summary .vbar { width: 14px; }
.erp footer { display: flex; padding-top: 8px; }
.erp footer span { flex: 0 0 124px; height: 12px; line-height: 12px; border: solid #aaa; border-width: 1px 0 0 1px; border-bottom: 1px solid #ccc; margin-right: 2px; white-space: nowrap; padding-left: 2px; }
.erp footer span:first-child { flex-basis: 122px; padding-left: 0; border-left: 0; }
.erp footer span:last-child { flex: 1; margin: 0; }

/* Print progress window */
.printing { position: absolute; left: 500px; top: 262px; width: 136px; background: #fffff6; border: 1px solid #aaa; padding-bottom: 6px; text-align: right; }
.pclose { display: grid; place-items: center; width: 24px; height: 22px; margin: 0 0 12px auto; background: #f4a6ae; color: #fff; }
.pclose svg { width: 8px; height: 8px; }
.printing p { width: 100px; height: 12px; line-height: 11px; border: solid #777; border-width: 1px 0 0; border-right: 1px solid #ddd; border-bottom: 1px solid #ddd; margin-bottom: 10px; padding-right: 48px; white-space: nowrap; }
.printing p + p { padding-right: 36px; margin-bottom: 22px; }
.cancelp { display: block; width: 103px; height: 18px; border: solid #666; border-width: 1px 2px 2px 1px; outline: 1px dotted #333; outline-offset: -4px; text-align: right; padding-right: 37px; white-space: nowrap; }

/* Save As dialog */
.dialog { position: absolute; left: 17px; top: 39px; width: 529px; background: #fffff6; border: 1px solid #4a92bd; color: #222; }
.dialog svg { width: 8px; height: 8px; }
.dtitle { display: flex; justify-content: space-between; align-items: center; height: 22px; padding: 0 7px 1px 6px; }
.dialog .dtitle svg { width: 9px; height: 9px; }
.addr { display: flex; align-items: center; height: 27px; padding: 0 9px 2px; color: #555; }
.addr > svg { width: 11px; height: 10px; margin-right: 11px; }
.dialog .addr .tiny { width: 6px; height: 6px; margin: 0 10px 0 -3px; }
.dialog .addr .north { transform: rotate(90deg); width: 10px; margin-right: 3px; }
.path { flex: 1; display: flex; align-items: center; gap: 5px; height: 16px; border: 1px solid #ddd; padding: 0 2px 0 2px; }
.path span { color: #333; }
.dialog .path svg { width: 6px; height: 6px; }
.dialog .path .desk { width: 13px; height: 10px; margin-right: -1px; }
.dialog .path .drop { width: 8px; height: 8px; }
.refresh { width: 16px; height: 16px; border: 1px solid #ddd; border-left: 0; display: grid; place-items: center; }
.search { display: flex; align-items: center; width: 151px; height: 16px; border: 1px solid #ddd; margin-left: 9px; padding: 0 5px; }
.search input { width: 131px; }
.search input::placeholder { color: #777; opacity: 1; }
.dtools { display: flex; align-items: center; height: 22px; background: #f5ffff; border-bottom: 1px solid #e6efef; padding: 0 11px 0 13px; color: #2a3a5e; }
.dtools button + button { margin-left: 22px; }
.tri { display: inline-block; border: 3px solid transparent; border-top: 4px solid #223; border-bottom: 0; margin-left: 3px; vertical-align: 1px; }
.dialog .view { width: 13px; height: 10px; margin: 0 4px 0 auto; }
.dialog .help { width: 12px; height: 12px; margin-left: 22px; }
.dbody { display: flex; height: 194px; }
.tree { list-style: none; width: 104px; padding-top: 6px; overflow: hidden; }
.tree li { display: flex; align-items: center; height: 18px; gap: 4px; padding: 1px 0 0 24px; white-space: nowrap; }
.tree .root { padding-left: 18px; }
.tree .on { background: #dcded5; }
.dialog .tree svg { width: 12px; height: 12px; }
.sbar { display: flex; flex-direction: column; align-items: center; width: 13px; padding: 4px 0 2px; color: #444; }
.sbar i { width: 11px; height: 71px; background: #cccec5; margin-top: 82px; }
.sbar .end { margin: auto 0 0; }
.files { flex: 1; padding-left: 2px; display: flex; flex-direction: column; min-width: 0; }
.fmain { display: flex; flex: 1; }
.files table { flex: 1; width: 100%; min-width: 0; border-spacing: 0; table-layout: fixed; height: 181px; }
.files th { position: relative; font-weight: 400; text-align: left; color: #5f6f8f; height: 24px; padding: 0 0 4px 5px; border-right: 1px solid #e8eee8; }
.files th:first-child { width: 204px; padding-left: 14px; }
.files th:nth-child(2), .files th:nth-child(3) { width: 90px; }
.files th:last-child { border: 0; }
.sorted svg { position: absolute; left: 40px; top: -2px; }
.files td { height: 15px; padding: 0 0 0 5px; color: #777; line-height: 12px; white-space: nowrap; }
.files td:first-child { padding-left: 16px; color: #222; }
.files td svg { display: inline-block; vertical-align: middle; margin-right: 3px; }
.dialog .files td svg { width: 10px; height: 12px; }
.fbar { flex: none; width: 11px; padding-bottom: 2px; position: relative; background: #fffff6; }
.fbar i { margin-top: 1px; height: 82px; }
.hs { display: flex; align-items: center; height: 13px; padding-left: 2px; color: #444; }
.hs i { width: 323px; height: 11px; background: #cccec5; margin: 0 48px 0 3px; }
.form { display: grid; grid-template-columns: 90px 1fr; column-gap: 4px; row-gap: 2px; align-items: center; padding: 8px 3px 0 0; }
.form label { text-align: right; }
.combo { display: flex; align-items: center; height: 17px; border: 1px solid #bbb; padding: 0 2px; justify-content: space-between; color: #222; }
.combo.act { border-color: #4aa0e0; }
.combo.grey { background: #eeefe8; }
.combo svg { color: #666; }
.combo.act input { width: 262px; height: 12px; background: #0b7ad9; color: #fff; padding-left: 1px; margin-left: 1px; }
.combo select { appearance: none; width: 95%; }
.dfoot { position: relative; display: flex; align-items: flex-start; padding: 15px 13px 10px 9px; }
.hide { display: flex; align-items: center; gap: 6px; margin: 7px auto 0 0; }
.btn { width: 65px; height: 19px; border: 1px solid #bbb; background: #eeefe8; margin-left: 10px; text-align: center; }
.btn.primary { border: 2px solid #2e8be0; }
.grip { position: absolute; right: 1px; bottom: 1px; width: 7px; height: 7px; background: repeating-linear-gradient(90deg, #bbb 0 1px, transparent 1px 3px); clip-path: polygon(100% 0, 100% 100%, 0 100%); }

/* Remote taskbar */
.rtask { display: flex; justify-content: space-between; height: 30px; background: #020b0c; color: #eee; }
.ricons { display: grid; grid-template-columns: repeat(12, 1fr); width: 440px; }
.ricons span { display: grid; place-items: center; }
.ricons svg { width: 18px; height: 18px; }
.ricons .s13 { width: 13px; height: 13px; }
.ricons .s16 { width: 16px; height: 16px; }
.ricons .tview { width: 16px; height: 11px; }
.ricons .run { background: linear-gradient(#6aa9dc, #6aa9dc) bottom / 30px 2px no-repeat; }
.ricons .cur { background: linear-gradient(#6aa9dc, #6aa9dc) bottom / 100% 2px no-repeat #3a4344; }
.rtray { display: flex; align-items: center; gap: 6px; padding-right: 19px; }
.rtray svg { width: 12px; height: 12px; }
.rtray .s10 { width: 10px; }
.clock { text-align: center; line-height: 13px; margin: 0 6px 0 4px; }

/* AnyDesk status line */
.status { display: flex; align-items: center; height: 24px; border-top: 1px solid #999; padding: 0 5px; gap: 10px; }
.status svg { width: 14px; height: 14px; }
.status .msg { font: 13px Roboto, sans-serif; }
.status .time { margin-left: auto; }

/* Local taskbar */
.taskbar { display: flex; height: 40px; background: #0d0e0f; color: #fff; }
.start { width: 48px; display: grid; place-items: center; }
.start svg { width: 16px; height: 16px; }
.tsearch { display: flex; align-items: center; width: 344px; background: #f1f1f1; padding: 0 14px 0 9px; gap: 9px; font-size: 14px; color: #333; }
.tsearch input { flex: 1; min-width: 0; }
.tsearch input::placeholder { color: #444; opacity: 1; }
.cort { width: 22px; height: 22px; }
.mic { width: 12px; height: 17px; }
.sep { width: 4px; height: 16px; border: solid #444; border-width: 0 1px; margin: 12px 12px 0 6px; }
.apps { display: flex; }
.apps span { width: 49px; display: grid; place-items: center; }
.apps svg { width: 22px; height: 22px; }
.apps .any { width: 24px; height: 20px; }
.apps .run { background: linear-gradient(#dcefa8, #dcefa8) bottom / 40px 3px no-repeat; }
.apps .cur { background: linear-gradient(#dcefa8, #dcefa8) bottom / 100% 3px no-repeat #3c3c3c; }
.tray { margin-left: auto; display: flex; align-items: center; gap: 9px; padding-right: 10px; font: 12px Roboto, sans-serif; line-height: 17px; text-align: center; }
.tray .big { width: 24px; height: 22px; }
.date { margin-left: 4px; }
```
